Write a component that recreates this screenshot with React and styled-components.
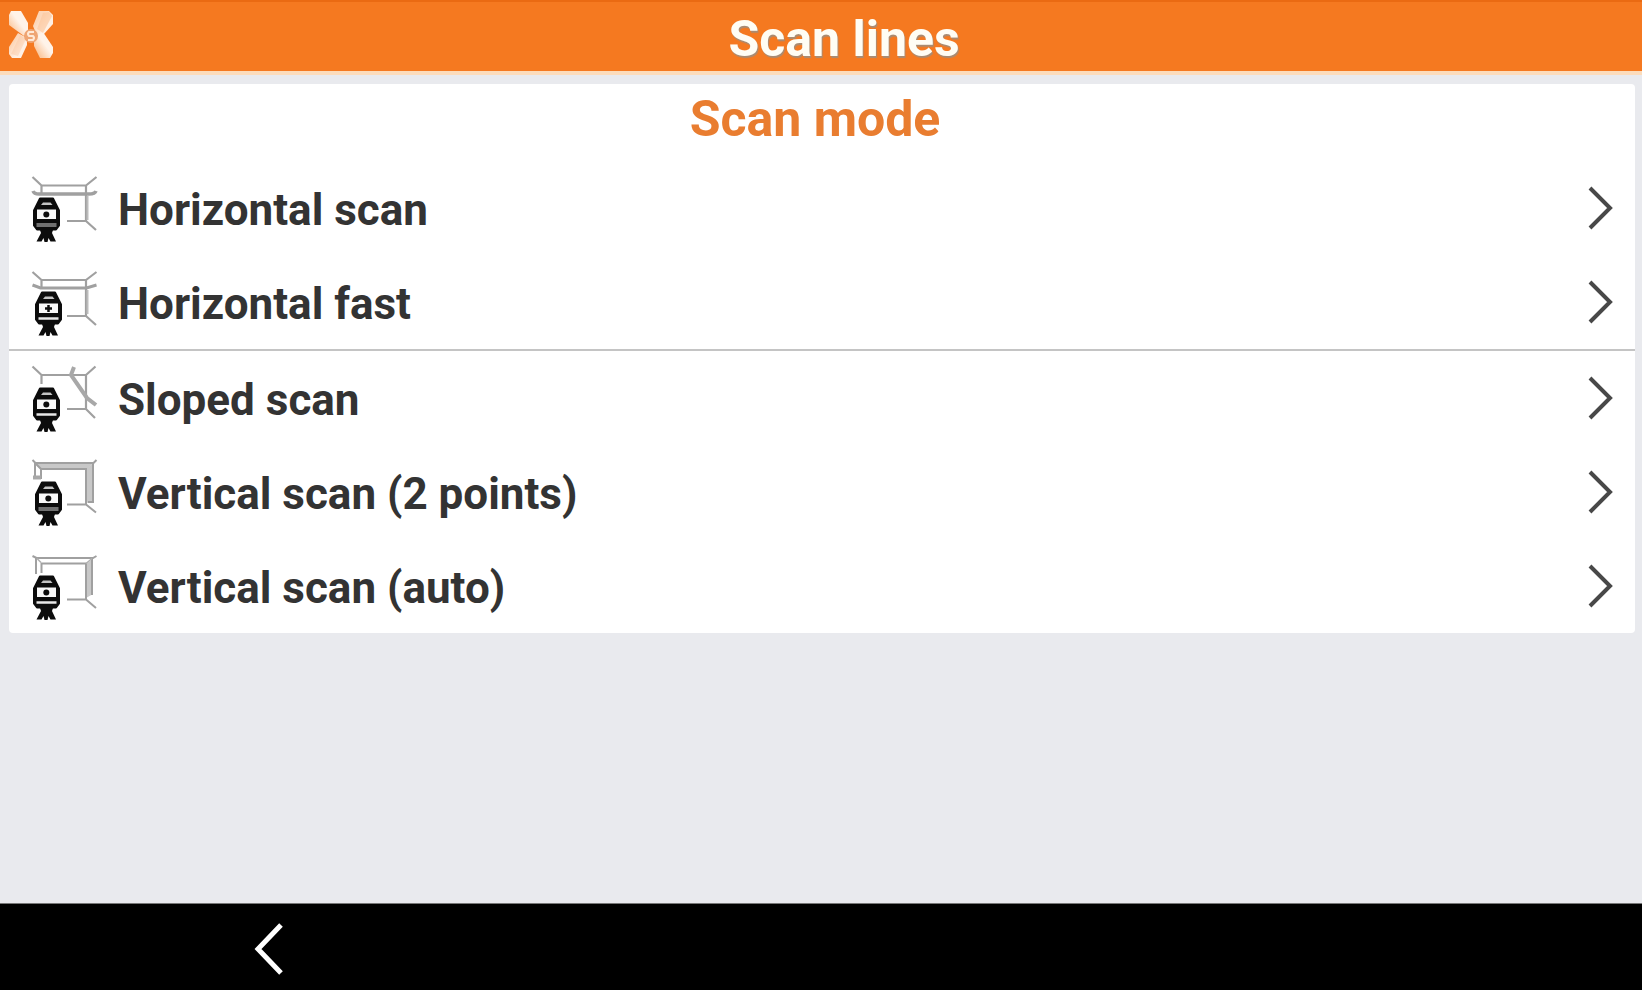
import React from "react";
import styled, { createGlobalStyle } from "styled-components";

const GlobalStyle = createGlobalStyle`
  * { box-sizing: border-box; }
  body { margin: 0; background: #e9eaee; }
  h1, h2, ul { margin: 0; padding: 0; }
  button { font: inherit; color: inherit; border: 0; background: none; cursor: pointer; }
`;

const Screen = styled.div`
  display: flex;
  flex-direction: column;
  min-height: 100vh;
  background: #e9eaee;
  font-family: Roboto, "Liberation Sans", sans-serif;
  color: #333333;
`;

const Header = styled.header`
  display: flex;
  align-items: flex-start;
  height: 75px;
  padding: 8px 8px 0;
  background: #f57920;
  border-top: 2px solid #ea6a12;
  border-bottom: 4px solid #fcdcbc;
`;

const Title = styled.h1`
  flex: 1;
  font-size: 50px;
  line-height: 58px;
  font-weight: 700;
  text-align: center;
  color: #fffdf4;
  text-shadow: 1px 2px 1px #a88c74;
`;

const Main = styled.main`
  flex: 1;
  padding: 9px 7px 9px 9px;
`;

const Card = styled.section`
  background: #ffffff;
  border-radius: 4px;
`;

const CardTitle = styled.h2`
  height: 77px;
  padding: 6px 14px 0 0;
  font-size: 50px;
  line-height: 58px;
  font-weight: 700;
  text-align: center;
  color: #e97d30;
`;

const ModeList = styled.ul`
  list-style: none;
`;

const ModeItem = styled.li`
  border-bottom: ${({ $divided }) => ($divided ? "2px solid #c4c4c4" : "0")};
`;

const ModeButton = styled.button`
  display: flex;
  align-items: center;
  width: 100%;
  height: 94px;
  padding: 0 21px;
  text-align: left;
`;

const ModeLabel = styled.span`
  flex: 1;
  padding: 4px 0 0 18px;
  font-size: 44px;
  line-height: 52px;
  font-weight: 700;
`;

const NavBar = styled.nav`
  display: flex;
  align-items: center;
  height: 87px;
  padding: 4px 0 0 239px;
  background: #000000;
  border-top: 1px solid #777777;
`;

const NavButton = styled.button`
  display: flex;
  justify-content: center;
  width: 60px;
  padding: 0;
`;

const Logo = () => (
  <svg width="46" height="50" viewBox="0 0 46 50" role="img" aria-label="Home">
    <defs>
      <linearGradient id="fall" x1="0" y1="1" x2="1" y2="0">
        <stop offset="0.2" stopColor="#fbc9a0" />
        <stop offset="0.55" stopColor="#fff3e9" />
      </linearGradient>
      <linearGradient id="rise" x1="0" y1="0" x2="1" y2="1">
        <stop offset="0.3" stopColor="#fdd6b7" />
        <stop offset="0.65" stopColor="#fff0e4" />
      </linearGradient>
    </defs>
    <path d="M3 1h10l7 12v8l-4 5L1 15V5z" fill="url(#fall)" />
    <path d="M31 1h10l4 4v9l-9 10-7 2-4-10z" fill="url(#rise)" />
    <path d="M10 23l9 5v7l-6 13H4l-3-4v-7z" fill="url(#rise)" />
    <path d="M35 22l10 15v6l-3 5H32l-6-12v-8z" fill="url(#fall)" />
    <path d="M35 3l6-1 3 4-9 17-6-4z" fill="#fbc49a" opacity="0.6" />
    <path d="M3 44l9-19 6 4-8 17z" fill="#fbc49a" opacity="0.4" />
    <circle cx="23" cy="26" r="7" fill="#efa573" />
    <path d="M26 22h-5q-2 2 0 4h4q2 2 0 4h-5" fill="none" stroke="#ffe9d6" strokeWidth="2" />
  </svg>
);

const Scanner = ({ x = 0, cross, light }) => (
  <g transform={`translate(${x} 1)`}>
    <path d="M11 24.500h13l4.500 9 1.500 3v15l-3 4H8l-3-4v-15l1.500-3z" fill="#0c0c0c" stroke="#0c0c0c" strokeWidth="2" strokeLinejoin="round" />
    <path d="M14 28.500h7.500l2 2.500H12z" fill="#c4c4c4" />
    <path d="M8 35.500h19v9.500H8z" fill="#f8f8f8" />
    {cross ? (
      <path d="M14 40.500h7M17.500 37v7" stroke="#0c0c0c" strokeWidth="2.500" />
    ) : (
      <circle cx="17.300" cy="40.500" r="3" fill="#0c0c0c" />
    )}
    {light ? (
      <path d="M7.500 50.500h20" stroke="#e8e8e8" strokeWidth="2.500" />
    ) : (
      <path d="M7.500 51h20" stroke="#707070" strokeWidth="4" />
    )}
    <path d="M11 56h13l-1 3 4 8.500h-5.500L19.500 64l-1 4h-3l-1-4-2 3.500H7.500L12 59z" fill="#0c0c0c" />
  </g>
);

const rooms = {
  horizontal: (
    <>
      <path d="M2.500 4l9 8.500h44.500l10.500-8.500M11.500 12v8M56 12v36M37 48h19l10 9" stroke="#a0a0a0" strokeWidth="2.200" />
      <path d="M3 18q1 3 6 3h50q6 0 7-3" stroke="#a0a0a0" strokeWidth="3.500" />
      <path d="M57.500 23v24" stroke="#bcbcbc" strokeWidth="2" />
    </>
  ),
  fast: (
    <>
      <path d="M2.500 5l9 8h44.500l10.500-8M11.500 13v8M56 13v36M37 49h19l10 9" stroke="#a0a0a0" strokeWidth="2.200" />
      <path d="M2.500 18l8 3h46l10-3" stroke="#a0a0a0" strokeWidth="3" />
      <path d="M57.500 23v24" stroke="#bcbcbc" strokeWidth="2" />
    </>
  ),
  sloped: (
    <>
      <path d="M2.500 3.500l9 8.500h44.500l9.500-8.500M11.500 12v9M56 12v34M37 46h19l9 9" stroke="#a0a0a0" strokeWidth="2.200" />
      <path d="M44 4l-3 8 16 23 9 7" stroke="#a8a8a8" strokeWidth="4" />
    </>
  ),
  twoPoints: (
    <>
      <path d="M4 5h60l-7 7H11z" fill="#c8c8c8" />
      <path d="M63 6v39l-7 1V12z" fill="#c8c8c8" />
      <path d="M2.500 3l3 3h58l3-3M11.500 12h44.500v35M63 6v39h-5M37 47.500h19l10 8M5 6v15h6V12z" stroke="#a0a0a0" strokeWidth="2" />
      <path d="M3 20.500h8" stroke="#a8a8a8" strokeWidth="4" />
    </>
  ),
  auto: (
    <>
      <path d="M56 13l7-5v35l-7 4z" fill="#c8c8c8" />
      <path d="M2.500 5l4 2h56.500l3.500-2M6 7v16M11.500 22V12.500h44.500V48M62 7v37M37 48.500h19l10 8.500" stroke="#a0a0a0" strokeWidth="2" />
      <path d="M7 7.500l4 4M62 7.500l-6 5" stroke="#b0b0b0" strokeWidth="1.500" />
    </>
  ),
};

const ModeIcon = ({ room, ...scanner }) => (
  <svg width="70" height="70" viewBox="0 0 70 70" fill="none" aria-hidden="true">
    {rooms[room]}
    <Scanner {...scanner} />
  </svg>
);

const Chevron = () => (
  <svg width="26" height="44" viewBox="0 0 26 44" fill="none" aria-hidden="true">
    <path d="M2 2l20 20L2 42" stroke="#484848" strokeWidth="4" />
  </svg>
);

const BackIcon = () => (
  <svg width="32" height="56" viewBox="0 0 32 56" fill="none" aria-hidden="true">
    <path d="M28 4L5 28l23 24" stroke="#ffffff" strokeWidth="5" />
  </svg>
);

const modes = [
  { label: "Horizontal scan", room: "horizontal", x: -1 },
  { label: "Horizontal fast", room: "fast", x: 1, cross: true, light: true, divided: true },
  { label: "Sloped scan", room: "sloped", x: -1, light: true },
  { label: "Vertical scan (2 points)", room: "twoPoints", x: 1 },
  { label: "Vertical scan (auto)", room: "auto", x: -1, light: true },
];

export default function App() {
  return (
    <Screen>
      <GlobalStyle />
      <Header>
        <Logo />
        <Title>Scan lines</Title>
      </Header>
      <Main>
        <Card>
          <CardTitle>Scan mode</CardTitle>
          <ModeList>
            {modes.map(({ label, divided, ...icon }) => (
              <ModeItem key={label} $divided={divided}>
                <ModeButton type="button">
                  <ModeIcon {...icon} />
                  <ModeLabel>{label}</ModeLabel>
                  <Chevron />
                </ModeButton>
              </ModeItem>
            ))}
          </ModeList>
        </Card>
      </Main>
      <NavBar>
        <NavButton type="button" aria-label="Back">
          <BackIcon />
        </NavButton>
      </NavBar>
    </Screen>
  );
}
